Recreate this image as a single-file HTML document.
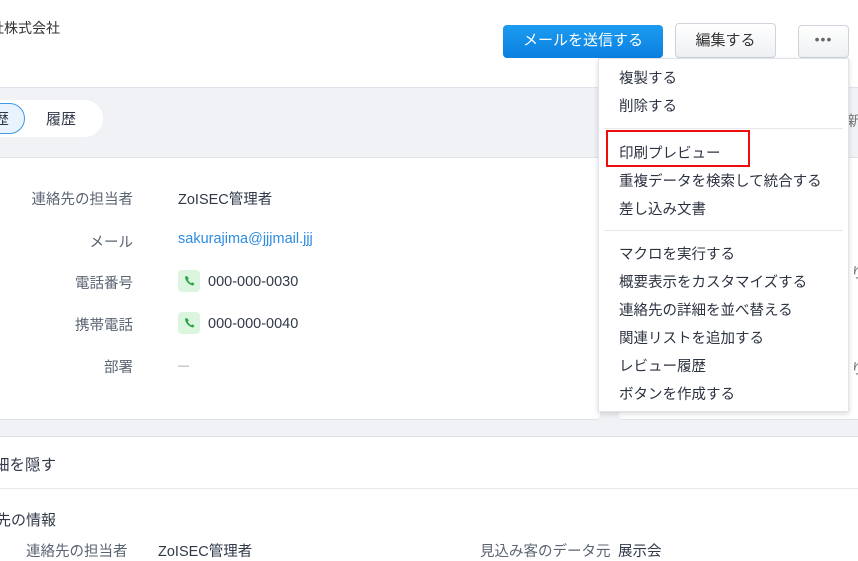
<!DOCTYPE html>
<html><head><meta charset="utf-8"><style>
*{margin:0;padding:0;box-sizing:border-box}
body{width:858px;height:555px;overflow:hidden;position:relative;background:#fff;font-family:"Liberation Sans","Noto Sans CJK JP",sans-serif;color:#313949;font-size:14.5px}
.a{position:absolute;white-space:nowrap}
.lbl{position:absolute;right:725px;color:#5b6472;white-space:nowrap}
.val{position:absolute;left:178px;white-space:nowrap}
.mi{position:absolute;left:619px;white-space:nowrap;font-size:14.5px;color:#2c3340}
.ph{display:inline-block;width:22px;height:22px;background:#dcf5de;border-radius:4px;vertical-align:middle;margin-right:8px;position:relative;top:-1px}
</style></head><body>
<div class="a" style="left:-10px;top:18px;font-size:14px;color:#333">社株式会社</div>
<div class="a" style="left:503px;top:25px;width:160px;height:33px;border-radius:4px;background:linear-gradient(#1c9cf0,#0a7fe0);color:#fff;text-align:center;line-height:32px;font-size:15px">メールを送信する</div>
<div class="a" style="left:675px;top:23px;width:101px;height:35px;border-radius:4px;border:1px solid #cfd4dc;background:linear-gradient(#fff,#eef0f3);text-align:center;line-height:33px;font-size:15px;color:#333">編集する</div>
<div class="a" style="left:798px;top:25px;width:51px;height:33px;border-radius:4px;border:1px solid #cfd4dc;background:linear-gradient(#fff,#eef0f3);text-align:center;line-height:26px;font-size:14px;color:#666;letter-spacing:1px">•••</div>

<div class="a" style="left:0;top:87px;width:858px;height:71px;background:#f0f2f6;border-top:1px solid #dfe3ea;border-bottom:1px solid #dfe3ea"></div>
<div class="a" style="left:-40px;top:100px;width:143px;height:37px;border-radius:19px;background:#fff"></div>
<div class="a" style="left:-40px;top:103px;width:65px;height:31px;border-radius:16px;background:#e8f3fe;border:1px solid #3d9ae8"></div>
<div class="a" style="left:-6px;top:108px;font-size:15px">歴</div>
<div class="a" style="left:46px;top:108px;font-size:15px">履歴</div>
<div class="a" style="left:847px;top:110px;color:#777">新</div>

<div class="a" style="left:0;top:158px;width:858px;height:278px;background:#f0f2f6"></div>
<div class="a" style="left:-10px;top:158px;width:610px;height:262px;background:#fff;border-bottom:1px solid #dbe3ea;border-radius:0 0 4px 4px"></div>
<div class="a" style="left:619px;top:158px;width:250px;height:262px;background:#fff;border-bottom:1px solid #dbe3ea;border-radius:4px"></div>
<div class="a" style="left:851px;top:262px;color:#777">り</div>
<div class="a" style="left:851px;top:358px;color:#777">り</div>

<div class="lbl" style="top:188px">連絡先の担当者</div><div class="val" style="top:188px">ZoISEC管理者</div>
<div class="lbl" style="top:231px">メール</div><div class="val" style="top:231px;color:#2d8be0">sakurajima@jjjmail.jjj</div>
<div class="lbl" style="top:272px">電話番号</div><div class="val" style="top:271px"><span class="ph"><svg width="22" height="22" viewBox="0 0 22 22"><path d="M7 6.5c0 4.2 3.8 8.5 8.3 9l1.2-1.8-2.2-1.5-1.1 1c-1.6-.8-2.8-2.1-3.4-3.7l1-1L9.3 6.3z" fill="#29a545"/></svg></span>000-000-0030</div>
<div class="lbl" style="top:314px">携帯電話</div><div class="val" style="top:313px"><span class="ph"><svg width="22" height="22" viewBox="0 0 22 22"><path d="M7 6.5c0 4.2 3.8 8.5 8.3 9l1.2-1.8-2.2-1.5-1.1 1c-1.6-.8-2.8-2.1-3.4-3.7l1-1L9.3 6.3z" fill="#29a545"/></svg></span>000-000-0040</div>
<div class="lbl" style="top:356px">部署</div><div class="val" style="top:356px;color:#999;font-size:11px;line-height:20px">—</div>

<div class="a" style="left:0;top:436px;width:858px;height:119px;background:#fff;border-top:1px solid #dbe3ea"></div>
<div class="a" style="left:-6px;top:453px;font-size:15.5px">細を隠す</div>
<div class="a" style="left:0;top:488px;width:858px;height:1px;background:#e6e9ee"></div>
<div class="a" style="left:-4px;top:509px;font-size:15px">先の情報</div>
<div class="a" style="left:26px;top:540px;color:#5b6472">連絡先の担当者</div>
<div class="a" style="left:158px;top:540px">ZoISEC管理者</div>
<div class="a" style="left:480px;top:540px;color:#5b6472">見込み客のデータ元</div>
<div class="a" style="left:618px;top:540px">展示会</div>

<div class="a" style="left:598px;top:58px;width:251px;height:354px;background:#fff;border:1px solid #e0e3e8;box-shadow:0 2px 5px rgba(0,0,0,.15)"></div>
<div class="mi" style="top:67px">複製する</div>
<div class="mi" style="top:95px">削除する</div>
<div class="a" style="left:604px;top:128px;width:239px;height:1px;background:#e6e8ec"></div>
<div class="a" style="left:606px;top:130px;width:144px;height:37px;border:2px solid #ee0d0d"></div>
<div class="mi" style="top:142px">印刷プレビュー</div>
<div class="mi" style="top:170px">重複データを検索して統合する</div>
<div class="mi" style="top:198px">差し込み文書</div>
<div class="a" style="left:604px;top:230px;width:239px;height:1px;background:#e6e8ec"></div>
<div class="mi" style="top:243px">マクロを実行する</div>
<div class="mi" style="top:271px">概要表示をカスタマイズする</div>
<div class="mi" style="top:299px">連絡先の詳細を並べ替える</div>
<div class="mi" style="top:327px">関連リストを追加する</div>
<div class="mi" style="top:355px">レビュー履歴</div>
<div class="mi" style="top:383px">ボタンを作成する</div>
</body></html>
